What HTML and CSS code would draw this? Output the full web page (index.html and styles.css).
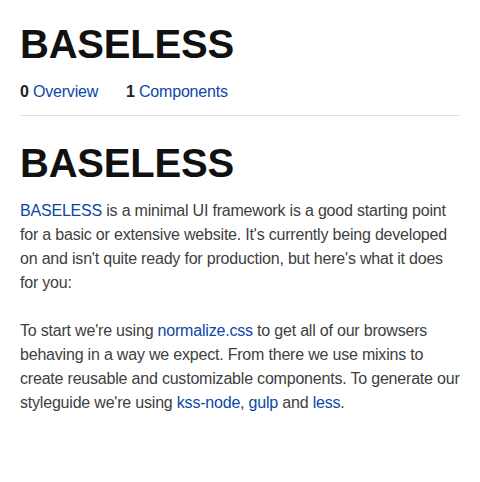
FILE: index.html
```html
<!DOCTYPE html>
<html lang="en">
<head>
<meta charset="utf-8">
<title>BASELESS</title>
<link rel="stylesheet" href="styles.css">
</head>
<body>
<div class="page">
  <header class="header">
    <h1 class="title">BASELESS</h1>
    <nav class="nav">
      <span class="nav-item"><b class="nav-num">0</b> <a href="#" class="link">Overview</a></span>
      <span class="nav-item"><b class="nav-num">1</b> <a href="#" class="link">Components</a></span>
    </nav>
  </header>
  <main class="content">
    <h2 class="title">BASELESS</h2>
    <p class="para"><a href="#" class="link">BASELESS</a> is a minimal UI framework is a good starting point for a basic or extensive website. It's currently being developed on and isn't quite ready for production, but here's what it does for you:</p>
    <p class="para">To start we're using <a href="#" class="link">normalize.css</a> to get all of our browsers behaving in a way we expect. From there we use mixins to create reusable and customizable components. To generate our styleguide we're using <a href="#" class="link">kss-node</a>, <a href="#" class="link">gulp</a> and <a href="#" class="link">less</a>.</p>
  </main>
</div>
</body>
</html>
```
FILE: styles.css
```css
html, body {
  margin: 0;
  padding: 0;
  background: #fff;
}
body {
  font-family: "Liberation Sans", Arial, sans-serif;
  font-size: 16px;
  line-height: 24px;
  letter-spacing: -0.2px;
  color: #404040;
}
.page {
  padding: 20px;
}
.header {
  border-bottom: 1px solid #dedede;
  padding-bottom: 11px;
}
.title {
  margin: 0;
  font-size: 40px;
  line-height: 48px;
  font-weight: bold;
  letter-spacing: -0.2px;
  color: #111;
}
.nav {
  display: flex;
  gap: 28px;
  margin-top: 12px;
}
.nav-num {
  color: #222;
}
.link {
  color: #0b47a8;
  text-decoration: none;
}
.content {
  padding-top: 23px;
}
.content .title {
  margin-bottom: 12px;
}
.para {
  margin: 0 0 24px;
}
```
